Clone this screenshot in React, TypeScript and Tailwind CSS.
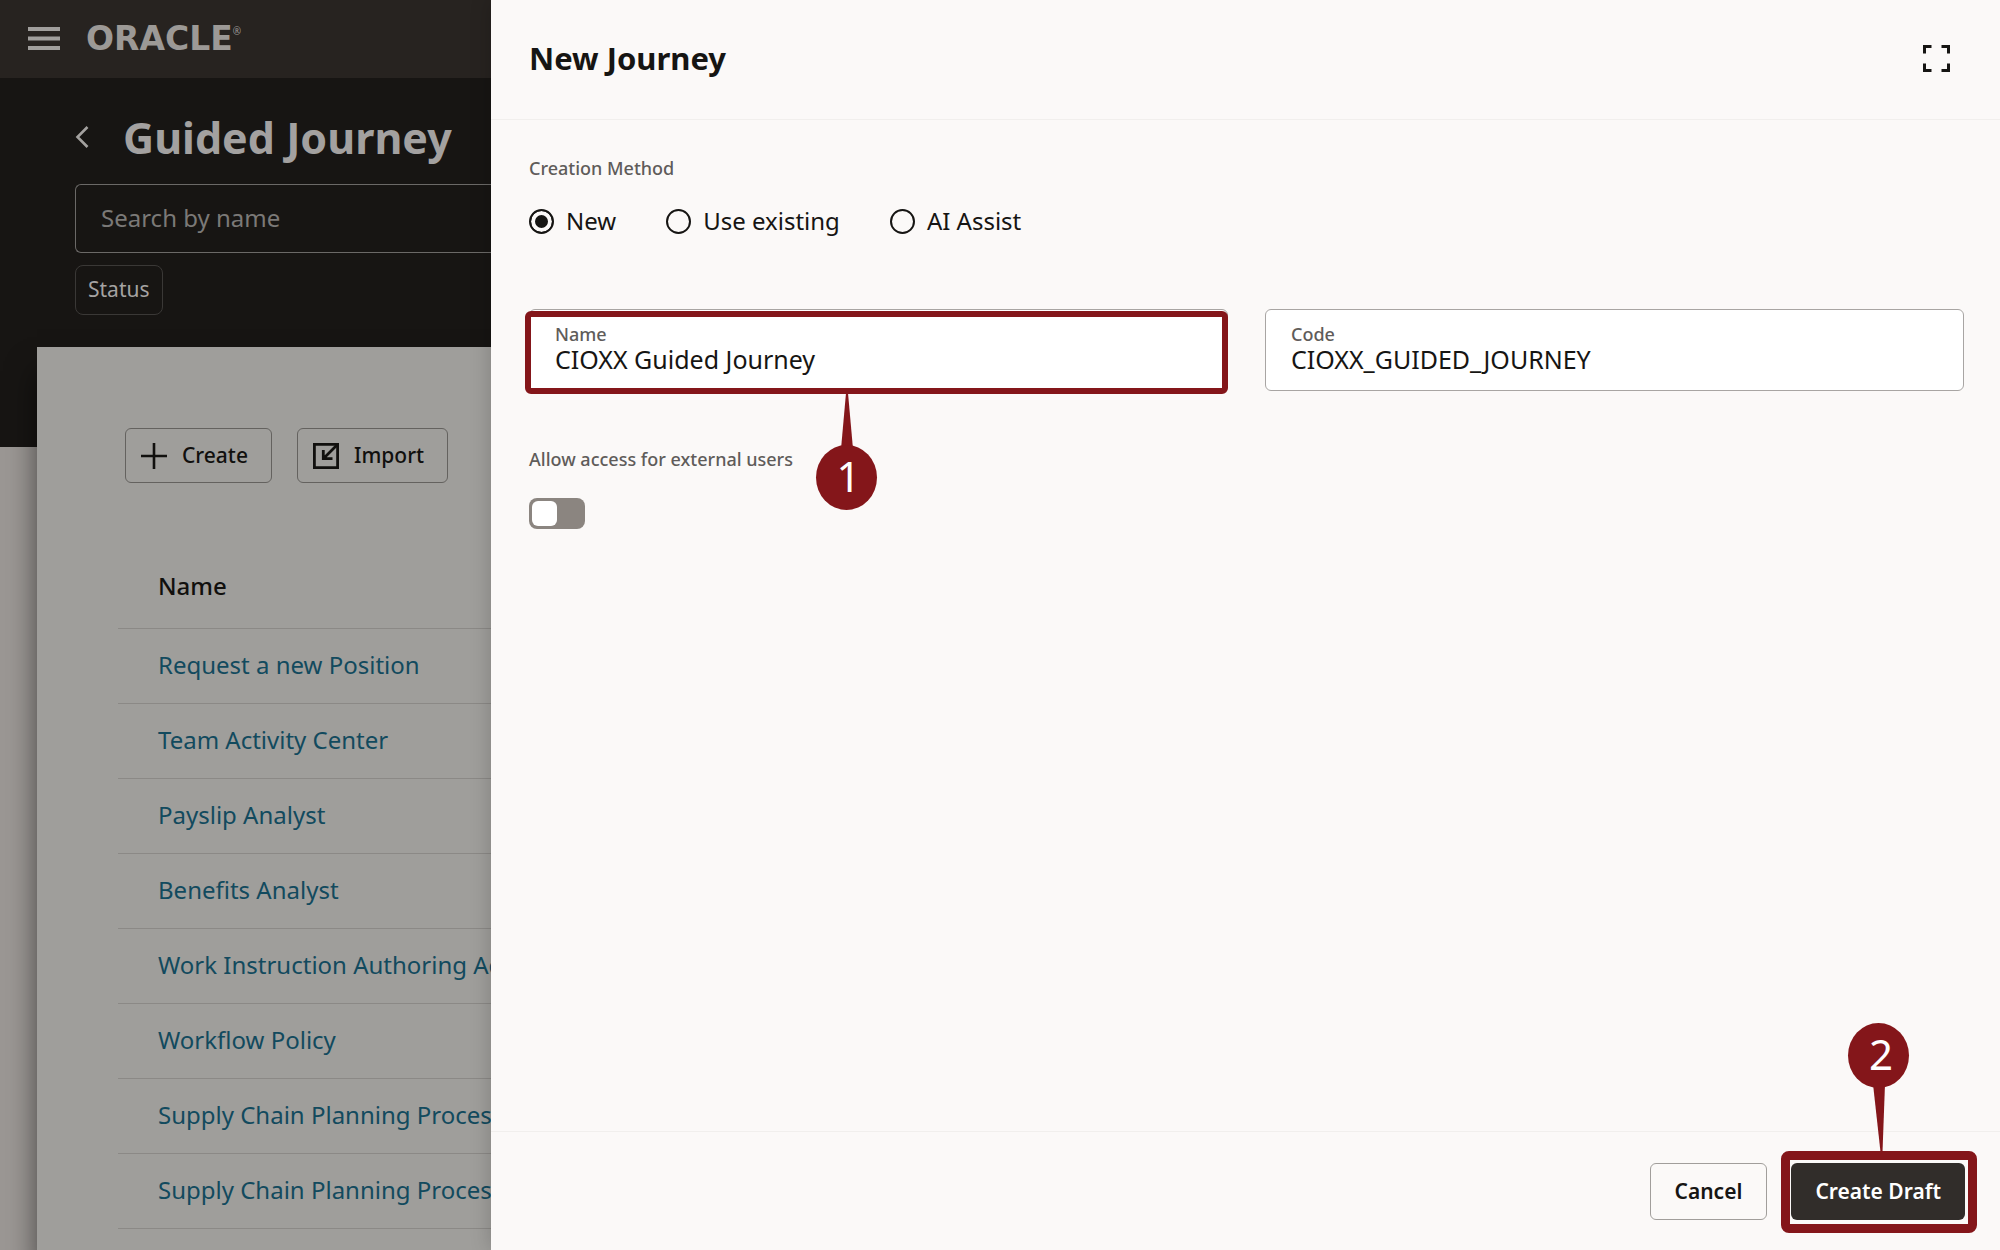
import type { ReactNode } from "react";

const journeys = [
  "Request a new Position",
  "Team Activity Center",
  "Payslip Analyst",
  "Benefits Analyst",
  "Work Instruction Authoring Advisor",
  "Workflow Policy",
  "Supply Chain Planning Process Advisor",
  "Supply Chain Planning Process Analyst",
];

function PlusIcon() {
  return (
    <svg aria-hidden="true" className="size-[26px]" viewBox="0 0 26 26" fill="none" stroke="currentColor" strokeWidth="2.6">
      <path d="M13 0v26M0 13h26" />
    </svg>
  );
}

function ImportIcon() {
  return (
    <svg aria-hidden="true" className="size-[26px]" viewBox="0 0 26 26" fill="none" stroke="currentColor" strokeWidth="2.8">
      <path d="M1.4 1.4h23.2v23.2H1.4z" />
      <path d="M24 2 11 15M10.3 7v8.7H19.5" />
    </svg>
  );
}

function ToolbarButton({ icon, label }: { icon: ReactNode; label: string }) {
  return (
    <button
      type="button"
      className="flex h-[55px] items-center gap-[15px] rounded-md border border-[#64625f] pr-[23px] pl-[15px] text-[21px] font-medium text-[#11100e]"
    >
      {icon}
      {label}
    </button>
  );
}

function BackgroundPage() {
  return (
    <div className="flex min-h-full flex-col bg-[#9b9794]">
      <header className="flex h-[78px] items-center gap-[26px] bg-[#272320] pl-7">
        <button type="button" aria-label="Open navigation" className="text-[#a19f9d]">
          <svg className="h-6 w-8" viewBox="0 0 32 24" fill="currentColor">
            <path d="M0 0h32v4H0zM0 9.5h32v4H0zM0 19h32v4H0z" />
          </svg>
        </button>
        <div className="flex items-start text-[#9c9996]">
          <span className="font-['DejaVu_Sans'] text-[33px] leading-8 font-bold">ORACLE</span>
          <span className="text-[10px] leading-4">®</span>
        </div>
      </header>

      <div className="h-[369px] shrink-0 bg-[#171513] pl-[75px]">
        <div className="flex h-[106px] items-center gap-[34px] pt-6 pb-3">
          <button type="button" aria-label="Back" className="text-[#a3a19f]">
            <svg className="h-[22px] w-[14px]" viewBox="0 0 14 22" fill="none" stroke="currentColor" strokeWidth="2.6">
              <path d="M12.5 1 2.5 11l10 10" />
            </svg>
          </button>
          <h1 className="text-[43px] leading-none font-bold text-[#a3a1a0]">Guided Journey</h1>
        </div>
        <input
          type="text"
          aria-label="Search by name"
          placeholder="Search by name"
          className="block h-[69px] w-full rounded-l-md border border-r-0 border-[#6b6967] bg-transparent px-[25px] pb-0.5 text-[24px] text-[#a3a1a0] placeholder:text-[#7b7977]"
        />
        <button
          type="button"
          className="mt-3 h-[50px] rounded-lg border border-[#3a3836] px-3 text-[21px] text-[#a5a3a2]"
        >
          Status
        </button>
      </div>

      <main className="relative -mt-[100px] ml-[37px] grow bg-[#9f9e9b] pt-[81px] pl-[81px] shadow-[0_24px_28px_rgba(0,0,0,0.55)]">
        <div className="flex gap-[25px] pl-[7px]">
          <ToolbarButton icon={<PlusIcon />} label="Create" />
          <ToolbarButton icon={<ImportIcon />} label="Import" />
        </div>
        <table className="mt-[62px] w-full text-left text-[24px]">
          <thead>
            <tr className="h-[83px] border-b border-[#8b8986]">
              <th scope="col" className="pl-10 font-medium text-[#11100e]">
                Name
              </th>
            </tr>
          </thead>
          <tbody>
            {journeys.map((name) => (
              <tr key={name} className="h-[75px] border-b border-[#8b8986]">
                <td className="pb-0.5 pl-10">
                  <a href="#journey" className="whitespace-nowrap text-[#124a5e]">
                    {name}
                  </a>
                </td>
              </tr>
            ))}
          </tbody>
        </table>
      </main>
    </div>
  );
}

function Radio({ label, checked = false }: { label: string; checked?: boolean }) {
  return (
    <label className="flex items-center gap-3 text-[24px] leading-8 text-[#161513]">
      <input
        type="radio"
        name="creation-method"
        defaultChecked={checked}
        className="size-[25px] appearance-none rounded-full border-2 border-[#161513] checked:bg-[#161513] checked:shadow-[inset_0_0_0_4px_#fbf9f8]"
      />
      {label}
    </label>
  );
}

function Field({ id, label, value, children }: { id: string; label: string; value: string; children?: ReactNode }) {
  return (
    <div className="relative h-[82px] rounded-md border border-[#a8a5a3] bg-white px-[25px] pt-4">
      <label htmlFor={id} className="block text-[18px] leading-4 font-medium text-[#5f5c5a]">
        {label}
      </label>
      <input
        id={id}
        type="text"
        defaultValue={value}
        className="block h-[34px] w-full bg-transparent text-[25px] leading-[34px] text-[#161513] outline-none"
      />
      {children}
    </div>
  );
}

function NamePin() {
  return (
    <div className="pointer-events-none absolute top-[83px] left-[286px] flex w-[61px] flex-col items-center">
      <svg aria-hidden="true" className="-mb-1 h-14 w-3" viewBox="0 0 12 56" fill="#84161a">
        <path d="M5 0h2l5 56H0z" />
      </svg>
      <span className="flex h-[65px] w-full items-center justify-center rounded-[50%] bg-[#84161a] pb-1 pl-1 text-[42px] leading-none text-white">
        1
      </span>
    </div>
  );
}

function DraftPin() {
  return (
    <div className="pointer-events-none absolute bottom-[68px] left-[57px] flex w-[61px] flex-col items-center">
      <span className="flex h-[65px] w-full items-center justify-center rounded-[50%] bg-[#84161a] pb-1 pl-1 text-[42px] leading-none text-white">
        2
      </span>
      <svg aria-hidden="true" className="-mt-1 h-[68px] w-4" viewBox="0 0 16 68" fill="#84161a">
        <path d="M2 0h12L11.5 68h-2z" />
      </svg>
    </div>
  );
}

function Drawer() {
  return (
    <section
      role="dialog"
      aria-labelledby="drawer-title"
      className="absolute inset-y-0 right-0 left-[491px] flex flex-col bg-[#fbf9f8] shadow-[0_0_20px_rgba(0,0,0,0.2)]"
    >
      <header className="flex h-[120px] items-center justify-between border-b border-[#f1efed] pr-[50px] pb-0.5 pl-[38px]">
        <h2 id="drawer-title" className="text-[31px] leading-none font-bold text-[#161513]">
          New Journey
        </h2>
        <button type="button" aria-label="Expand to full screen" className="text-[#161513]">
          <svg className="size-[27px]" viewBox="0 0 27 27" fill="none" stroke="currentColor" strokeWidth="3">
            <path d="M1.5 8.5v-7h7M18.5 1.5h7v7M25.5 18.5v7h-7M8.5 25.5h-7v-7" />
          </svg>
        </button>
      </header>

      <div className="grow pt-9 pr-9 pl-[38px]">
        <fieldset>
          <legend className="text-[18px] leading-6 font-medium text-[#5f5c5a]">Creation Method</legend>
          <div className="flex gap-[50px] pt-[25px]">
            <Radio label="New" checked />
            <Radio label="Use existing" />
            <Radio label="AI Assist" />
          </div>
        </fieldset>

        <div className="mt-[72px] grid grid-cols-2 gap-[37px]">
          <Field id="journey-name" label="Name" value="CIOXX Guided Journey">
            <div className="pointer-events-none absolute top-px -right-px -bottom-1 -left-[5px] rounded-md border-6 border-[#84161a]" />
            <NamePin />
          </Field>
          <Field id="journey-code" label="Code" value="CIOXX_GUIDED_JOURNEY" />
        </div>

        <div className="mt-14 flex flex-col items-start gap-[27px]">
          <label htmlFor="external" className="text-[18px] leading-6 font-medium text-[#5f5c5a]">
            Allow access for external users
          </label>
          <input
            id="external"
            type="checkbox"
            role="switch"
            className="h-[31px] w-14 appearance-none rounded-lg bg-[#8b8580] p-[3px] before:block before:h-[25px] before:w-[25px] before:rounded-md before:bg-white"
          />
        </div>
      </div>

      <footer className="flex h-[119px] items-start justify-end gap-6 border-t border-[#f1efed] pt-[31px] pr-[35px]">
        <button
          type="button"
          className="h-[57px] rounded-md border border-[#a19e9b] px-6 text-[21px] font-semibold text-[#161513]"
        >
          Cancel
        </button>
        <div className="relative">
          <button type="button" className="h-[57px] rounded-md bg-[#312d2a] px-6 text-[21px] font-semibold text-white">
            Create Draft
          </button>
          <div className="pointer-events-none absolute -top-3 -right-3 -bottom-[13px] -left-2.5 rounded-lg border-9 border-[#84161a]" />
          <DraftPin />
        </div>
      </footer>
    </section>
  );
}

export default function App() {
  return (
    <div className="relative h-screen overflow-hidden font-['Noto_Sans','Open_Sans',sans-serif]">
      <BackgroundPage />
      <Drawer />
    </div>
  );
}
